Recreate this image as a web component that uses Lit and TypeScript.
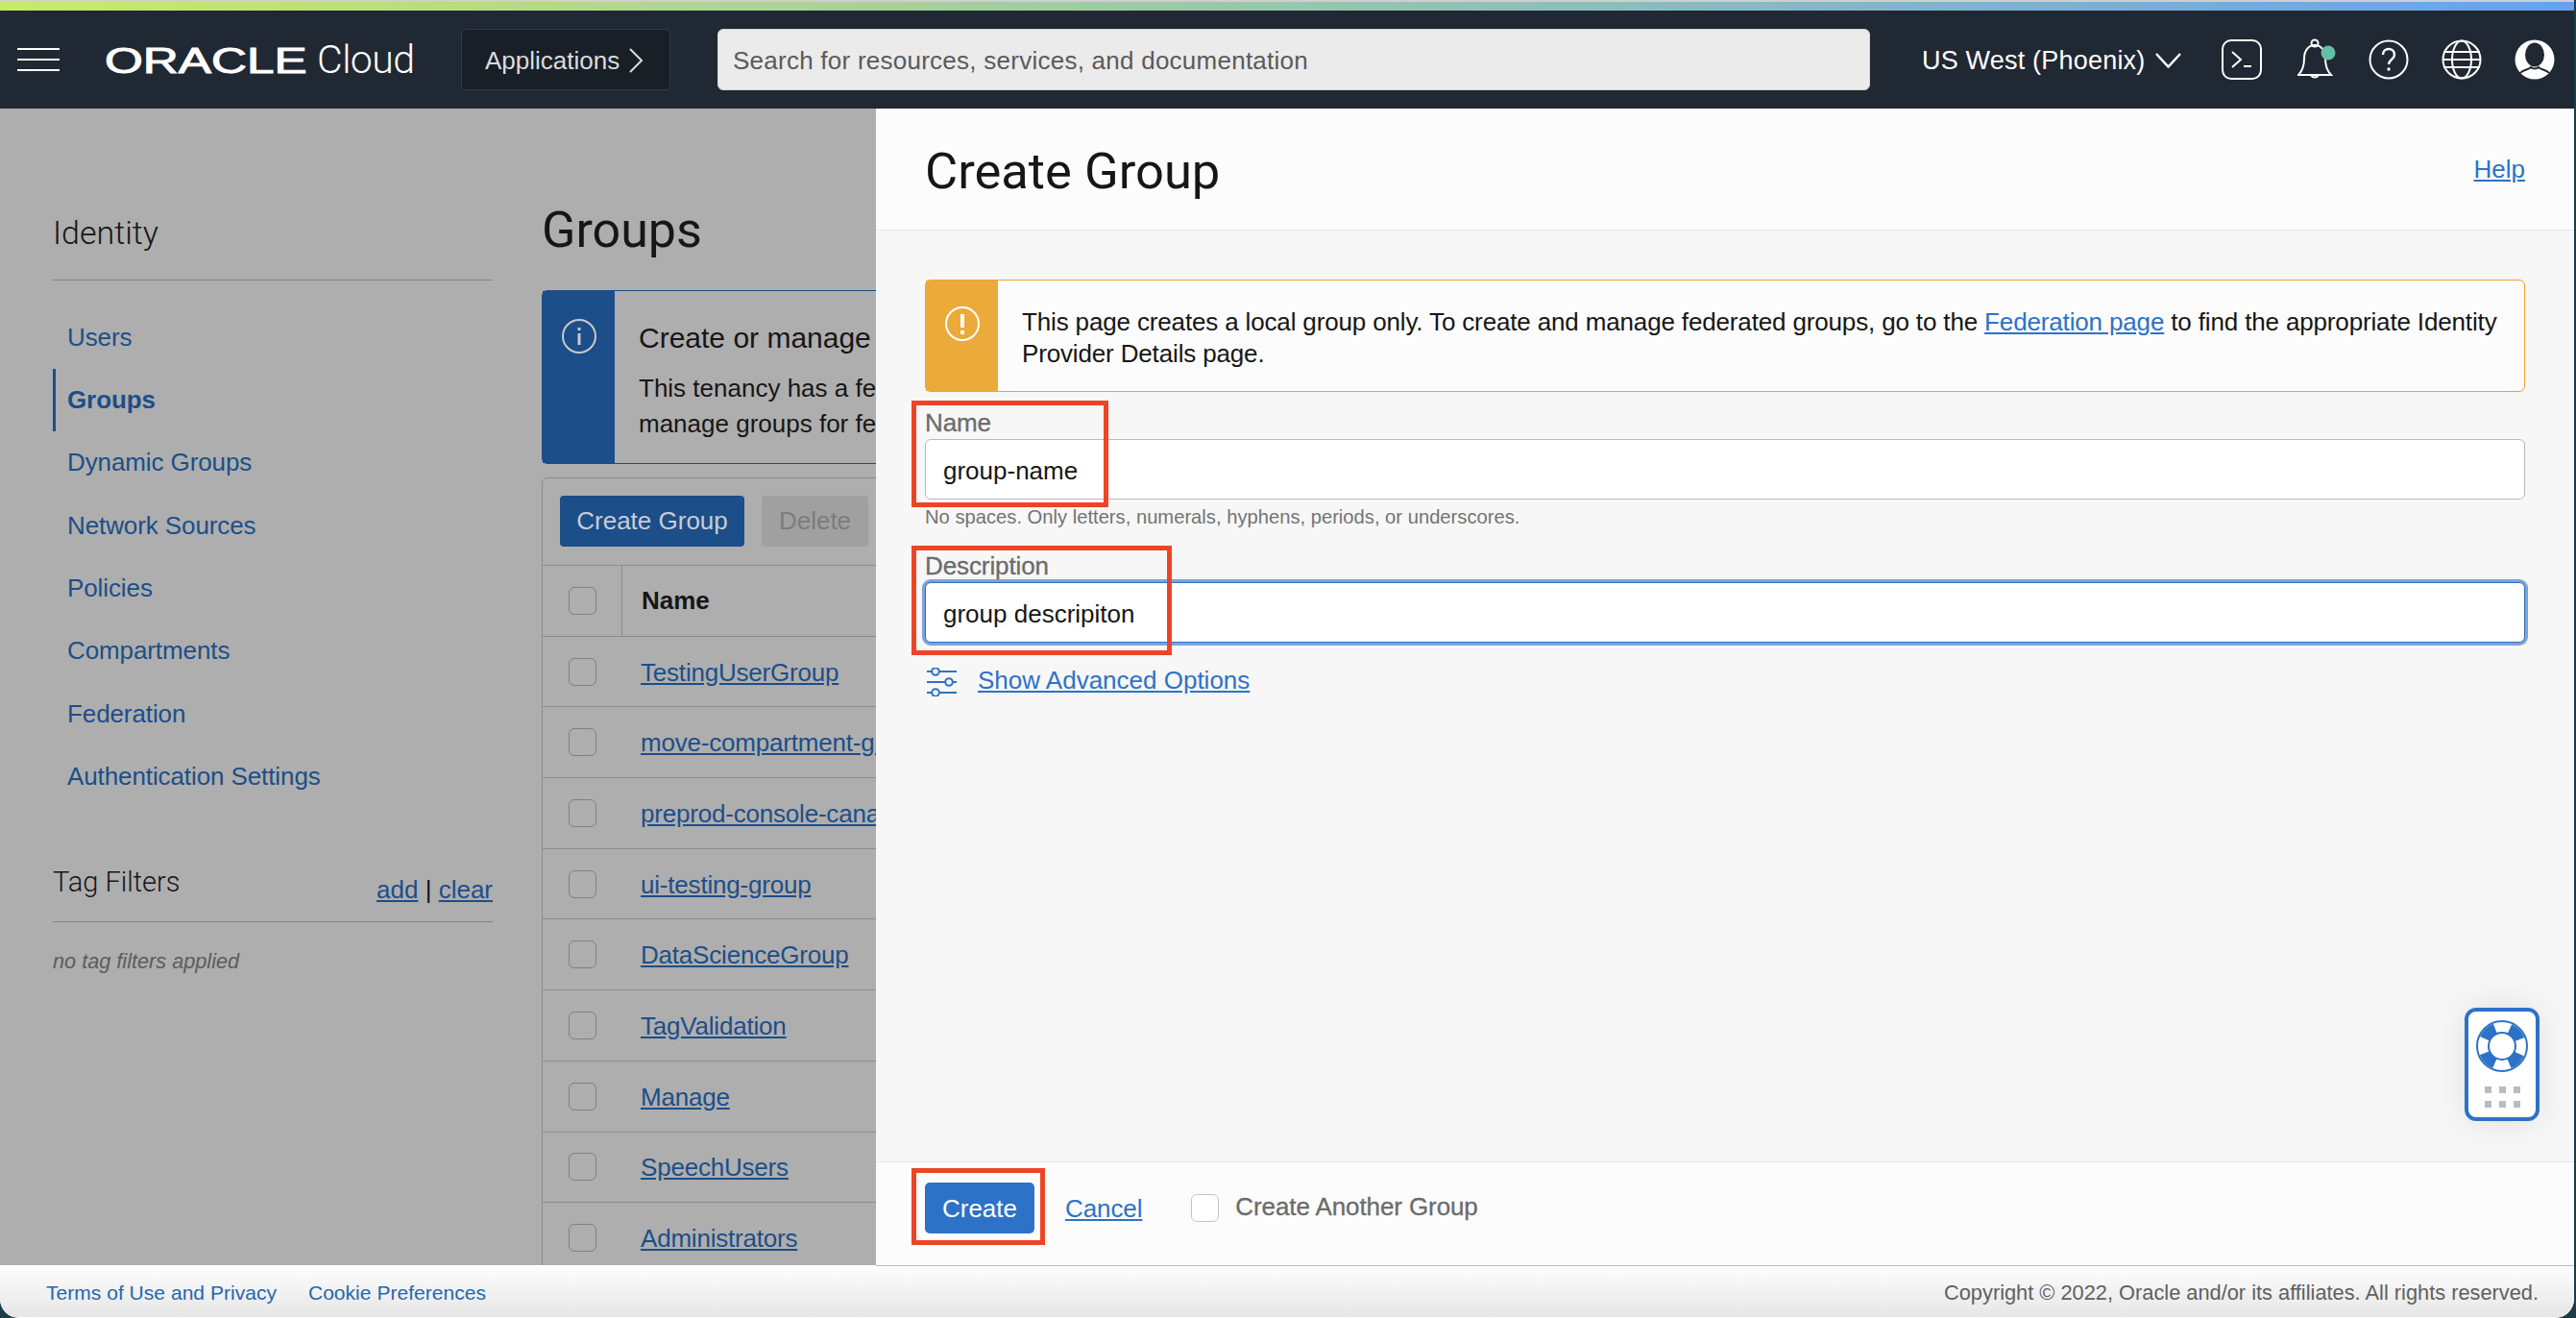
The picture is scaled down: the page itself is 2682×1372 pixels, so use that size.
import { LitElement, html, css } from 'lit';
import { customElement } from 'lit/decorators.js';

const NAV = [
  'Users',
  'Groups',
  'Dynamic Groups',
  'Network Sources',
  'Policies',
  'Compartments',
  'Federation',
  'Authentication Settings',
];

const GROUPS = [
  'TestingUserGroup',
  'move-compartment-group',
  'preprod-console-canary',
  'ui-testing-group',
  'DataScienceGroup',
  'TagValidation',
  'Manage',
  'SpeechUsers',
  'Administrators',
];

// red callouts drawn over the screenshot: x, y, w, h
const CALLOUTS = [
  [949, 417, 205, 111],
  [949, 568, 271, 114],
  [949, 1216, 139, 80],
];

@customElement('oci-topbar')
export class OciTopbar extends LitElement {
  static styles = css`
    :host {
      display: flex;
      align-items: center;
      height: 102px;
      padding-left: 18px;
      background: #202833;
      color: #fff;
      font-family: 'Liberation Sans', Arial, sans-serif;
      font-size: 26px;
    }
    .burger {
      display: flex;
      flex-direction: column;
      gap: 9px;
      width: 44px;
      margin-right: 47px;
    }
    .burger span {
      height: 2px;
      background: #fff;
    }
    .logo {
      width: 207px;
      margin-right: 14px;
      padding-top: 3px;
      font-size: 37px;
      line-height: 40px;
      -webkit-text-stroke: 1px #fff;
      transform: scaleX(1.385);
      transform-origin: left center;
      white-space: nowrap;
    }
    .cloud {
      width: 99px;
      margin-right: 51px;
      font-family: Roboto, 'Liberation Sans', sans-serif;
      font-size: 41px;
      font-weight: 300;
      letter-spacing: -0.5px;
    }
    .apps {
      display: flex;
      align-items: center;
      gap: 9px;
      box-sizing: border-box;
      width: 218px;
      height: 64px;
      margin-right: 49px;
      padding: 2px 0 0 24px;
      background: #181f27;
      border: 1px solid #323c48;
      border-radius: 4px;
      color: #dcdcdc;
    }
    .search {
      box-sizing: border-box;
      width: 1200px;
      height: 64px;
      padding-left: 15px;
      background: #ebebeb;
      border: 1px solid #d4d4d4;
      border-radius: 6px;
      color: #5a5a5a;
      letter-spacing: 0.25px;
      line-height: 64px;
    }
    .region {
      display: flex;
      align-items: center;
      gap: 11px;
      margin-left: 54px;
      padding-top: 2px;
      font-size: 27px;
      letter-spacing: 0.2px;
      white-space: nowrap;
    }
    .icons {
      display: flex;
      align-items: center;
      gap: 34px;
      margin-left: 42px;
    }
    .bell {
      margin: 0 -4px 0 3px;
    }
    svg {
      display: block;
      fill: none;
      stroke: currentColor;
      stroke-width: 2;
    }
  `;

  render() {
    return html`
      <div class="burger"><span></span><span></span><span></span></div>
      <div class="logo">ORACLE</div>
      <div class="cloud">Cloud</div>
      <div class="apps">
        Applications
        <svg width="16" height="26" viewBox="0 0 16 26"><path d="M2 1l12 12L2 25" /></svg>
      </div>
      <div class="search">Search for resources, services, and documentation</div>
      <div class="region">
        US West (Phoenix)
        <svg width="27" height="16" viewBox="0 0 27 16"><path d="M1 1l12.500 13.500L26 1" stroke-width="2.500" /></svg>
      </div>
      <div class="icons">
        <svg width="42" height="42" viewBox="0 0 42 42">
          <rect x="1" y="1" width="40" height="40" rx="9" />
          <path d="M11 13l9 8-9 8M23 28h8" />
        </svg>
        <svg class="bell" width="44" height="44" viewBox="0 0 44 44">
          <circle cx="18" cy="5" r="3.500" />
          <path d="M1 38c4-4 6-9 6-17 0-9 5-14 11-14s11 5 11 14c0 8 2 13 6 17zM14 38a4.500 4.500 0 0 0 8 0" />
          <circle cx="32" cy="15" r="7.500" fill="#62c0a3" stroke="none" />
        </svg>
        <svg width="42" height="42" viewBox="0 0 42 42">
          <circle cx="21" cy="21" r="19.500" />
          <path d="M15 16c0-4 3-6 6-6s6 2 6 6c0 5-6 5-6 10" stroke-width="2.400" />
          <circle cx="21" cy="31" r="1.700" fill="currentColor" stroke="none" />
        </svg>
        <svg width="42" height="42" viewBox="0 0 42 42">
          <circle cx="21" cy="21" r="19.500" />
          <ellipse cx="21" cy="21" rx="10" ry="19.500" />
          <path d="M2 13h38M1.500 21h39M2 29h38" />
        </svg>
        <svg width="42" height="42" viewBox="0 0 42 42">
          <circle cx="21" cy="21" r="20.500" fill="#fff" stroke="none" />
          <ellipse cx="21" cy="16" rx="10" ry="12.500" fill="#202833" stroke="none" />
          <path d="M6 35c3-4 9-3 11-6 2 2 6 2 8 0 2 3 8 2 11 6" stroke="#202833" />
        </svg>
      </div>
    `;
  }
}

@customElement('groups-page')
export class GroupsPage extends LitElement {
  static styles = css`
    :host {
      display: flex;
      height: 1204px;
      overflow: hidden;
      background: #aeaeae;
      color: #161616;
      font-family: 'Liberation Sans', Arial, sans-serif;
      font-size: 26px;
    }
    a {
      color: #1c4e89;
    }
    .side {
      flex: none;
      width: 458px;
      margin-left: 55px;
    }
    .side-title {
      margin-top: 99px;
      padding-bottom: 19px;
      border-bottom: 1px solid #848484;
      font-family: Roboto, 'Liberation Sans', sans-serif;
      font-size: 34px;
      font-weight: 300;
      line-height: 60px;
    }
    nav {
      margin-top: 26.500px;
    }
    nav div {
      box-sizing: border-box;
      height: 65.400px;
      padding-left: 15px;
      color: #1c4e89;
      letter-spacing: -0.1px;
      line-height: 65px;
    }
    nav .active {
      padding-left: 12px;
      border-left: 3px solid #1c4e89;
      font-weight: 700;
    }
    .tag-head {
      display: flex;
      justify-content: space-between;
      align-items: flex-start;
      margin-top: 45px;
      padding-bottom: 3px;
      border-bottom: 1px solid #848484;
      line-height: 60px;
    }
    .tag-head b {
      padding-top: 1px;
      font-family: Roboto, 'Liberation Sans', sans-serif;
      font-size: 29px;
      font-weight: 300;
    }
    .tag-links {
      margin-top: 9px;
    }
    .tag-empty {
      margin-top: 27px;
      color: #5c5c5c;
      font-size: 21.700px;
      font-style: italic;
      line-height: 28px;
    }
    .main {
      flex: none;
      width: 370px;
      margin-left: 51px;
      overflow: hidden;
    }
    h1 {
      margin: 87px 0 22px;
      font-family: Roboto, 'Liberation Sans', sans-serif;
      font-size: 52px;
      font-weight: 400;
      line-height: 80px;
    }
    .banner {
      display: flex;
      box-sizing: border-box;
      height: 181px;
      border: 1px solid #1c4e89;
      border-radius: 6px 0 0 6px;
    }
    .banner-band {
      flex: none;
      width: 75px;
      padding-top: 29px;
      box-sizing: border-box;
      background: #1c4e89;
      color: #c9c9c9;
    }
    .banner-band svg {
      display: block;
      margin: 0 auto;
    }
    .banner-body {
      padding: 29px 0 0 25px;
      line-height: 37px;
      white-space: nowrap;
    }
    .banner-body strong {
      display: block;
      margin-bottom: 14px;
      font-size: 30px;
      font-weight: 400;
      line-height: 40px;
    }
    .table {
      margin-top: 14px;
      border: 1px solid #8c8c8c;
      border-radius: 6px 0 0 0;
    }
    .toolbar {
      display: flex;
      gap: 18px;
      height: 90px;
      box-sizing: border-box;
      padding: 18px 0 0 18px;
    }
    .btn {
      flex: none;
      box-sizing: border-box;
      height: 53px;
      border-radius: 4px;
      line-height: 53px;
      text-align: center;
      white-space: nowrap;
    }
    .primary {
      width: 192px;
      background: #1c4e89;
      color: #c6cdd6;
    }
    .disabled {
      width: 111px;
      background: #a0a0a0;
      color: #7c7c7c;
    }
    .row {
      display: flex;
      align-items: center;
      height: 73.700px;
      box-sizing: border-box;
      border-top: 1px solid #8c8c8c;
    }
    .cell-check {
      flex: none;
      width: 83px;
      height: 100%;
      display: flex;
      align-items: center;
      padding-left: 27px;
      box-sizing: border-box;
    }
    .box {
      width: 29px;
      height: 29px;
      box-sizing: border-box;
      border: 1px solid #808080;
      border-radius: 6px;
    }
    .head .cell-check {
      border-right: 1px solid #8c8c8c;
    }
    .head .name {
      padding-left: 20px;
      font-weight: 700;
    }
    .row a {
      padding: 2px 0 0 19px;
      letter-spacing: -0.2px;
      white-space: nowrap;
    }
  `;

  render() {
    return html`
      <div class="side">
        <div class="side-title">Identity</div>
        <nav>
          ${NAV.map((n) => html`<div class=${n === 'Groups' ? 'active' : ''}>${n}</div>`)}
        </nav>
        <div class="tag-head">
          <b>Tag Filters</b>
          <span class="tag-links"><a href="#">add</a> | <a href="#">clear</a></span>
        </div>
        <div class="tag-empty">no tag filters applied</div>
      </div>
      <div class="main">
        <h1>Groups</h1>
        <div class="banner">
          <div class="banner-band">
            <svg width="36" height="36" viewBox="0 0 36 36" fill="none" stroke="currentColor" stroke-width="2">
              <circle cx="18" cy="18" r="17" />
              <path d="M18 15v12M18 9v3" stroke-width="3" />
            </svg>
          </div>
          <div class="banner-body">
            <strong>Create or manage</strong>
            This tenancy has a fed<br />
            manage groups for fed
          </div>
        </div>
        <div class="table">
          <div class="toolbar">
            <div class="btn primary">Create Group</div>
            <div class="btn disabled">Delete</div>
          </div>
          <div class="row head">
            <div class="cell-check"><div class="box"></div></div>
            <div class="name">Name</div>
          </div>
          ${GROUPS.map(
            (g) => html`
              <div class="row">
                <div class="cell-check"><div class="box"></div></div>
                <a href="#">${g}</a>
              </div>
            `
          )}
        </div>
      </div>
    `;
  }
}

@customElement('create-group-drawer')
export class CreateGroupDrawer extends LitElement {
  static styles = css`
    :host {
      display: flex;
      flex-direction: column;
      height: 100%;
      box-sizing: border-box;
      background: #f7f7f7;
      border-bottom: 1px solid #bdbdbd;
      color: #161616;
      font-family: 'Liberation Sans', Arial, sans-serif;
      font-size: 26px;
    }
    a {
      color: #2d72c6;
    }
    .head {
      display: flex;
      flex: none;
      justify-content: space-between;
      align-items: center;
      box-sizing: border-box;
      height: 127px;
      padding: 4px 51px 0;
      background: #fcfcfc;
      border-bottom: 1px solid #e4e4e4;
    }
    h2 {
      margin: 0;
      font-family: Roboto, 'Liberation Sans', sans-serif;
      font-size: 52.500px;
      font-weight: 400;
    }
    .head a {
      margin-top: -3px;
    }
    .body {
      flex: 1;
      padding: 51px 51px 0;
    }
    .alert {
      display: flex;
      box-sizing: border-box;
      height: 117px;
      background: #fcfcfc;
      border: 1px solid #eba42f;
      border-radius: 6px;
    }
    .alert-band {
      flex: none;
      width: 75px;
      box-sizing: border-box;
      padding-top: 27px;
      background: #ebaa3a;
      color: #fff;
    }
    .alert-band svg {
      display: block;
      margin: 0 auto;
    }
    .alert-text {
      padding: 27px 20px 0 25px;
      letter-spacing: -0.15px;
      line-height: 33px;
    }
    label {
      display: block;
      margin-top: 17px;
      color: #6b6b6b;
      font-size: 26px;
      letter-spacing: -0.1px;
      line-height: 30px;
      -webkit-text-stroke: 0.3px #6b6b6b;
    }
    .input {
      box-sizing: border-box;
      height: 63px;
      margin-top: 2px;
      padding: 1px 0 0 18px;
      background: #fff;
      border: 1px solid #b6b9be;
      border-radius: 6px;
      line-height: 62px;
    }
    .input.focus {
      border-color: #2f6fc0;
      box-shadow: 0 0 0 3px #7da3d9;
    }
    .hint {
      margin-top: 5px;
      color: #737373;
      font-size: 20.200px;
      line-height: 26px;
    }
    .hint + label {
      margin-top: 23px;
    }
    .advanced {
      display: flex;
      align-items: center;
      gap: 22px;
      margin-top: 22px;
      padding-left: 2px;
      color: #2d72c6;
      line-height: 30px;
    }
    .advanced svg {
      margin-top: 4px;
    }
    .foot {
      display: flex;
      flex: none;
      align-items: center;
      box-sizing: border-box;
      height: 108px;
      padding: 0 0 12px 51px;
      background: #fcfcfc;
      border-top: 1px solid #e4e4e4;
    }
    .create {
      box-sizing: border-box;
      width: 114px;
      height: 53px;
      padding-top: 1px;
      background: #2d72c6;
      border-radius: 5px;
      color: #fff;
      line-height: 53px;
      text-align: center;
    }
    .cancel {
      margin: 2px 0 0 32px;
      letter-spacing: -0.1px;
    }
    .check {
      width: 29px;
      height: 29px;
      box-sizing: border-box;
      margin-left: 51px;
      background: #fff;
      border: 1px solid #c4c4c4;
      border-radius: 6px;
    }
    .check-label {
      margin: 0 0 2px 17px;
      color: #6b6b6b;
      letter-spacing: -0.1px;
      -webkit-text-stroke: 0.3px #6b6b6b;
    }
    .helper {
      position: absolute;
      right: 36px;
      top: 936px;
      display: flex;
      flex-direction: column;
      align-items: center;
      box-sizing: border-box;
      width: 78px;
      height: 118px;
      padding-top: 9px;
      background: #fff;
      border: 4px solid #2d72c6;
      border-radius: 12px;
      box-shadow: 0 0 34px rgba(0, 0, 0, 0.1);
    }
    .dots {
      display: grid;
      grid-template-columns: repeat(3, 7px);
      gap: 8px;
      margin-top: 15px;
    }
    .dots span {
      height: 7px;
      background: #b8bcc1;
    }
  `;

  render() {
    return html`
      <div class="head">
        <h2>Create Group</h2>
        <a href="#">Help</a>
      </div>
      <div class="body">
        <div class="alert">
          <div class="alert-band">
            <svg width="36" height="36" viewBox="0 0 36 36" fill="none" stroke="currentColor" stroke-width="2">
              <circle cx="18" cy="18" r="17" />
              <path d="M18 8v14M18 25v4" stroke-width="4" />
            </svg>
          </div>
          <div class="alert-text">
            This page creates a local group only. To create and manage federated groups, go to the
            <a href="#">Federation page</a> to find the appropriate Identity Provider Details page.
          </div>
        </div>
        <label>Name</label>
        <div class="input">group-name</div>
        <div class="hint">No spaces. Only letters, numerals, hyphens, periods, or underscores.</div>
        <label>Description</label>
        <div class="input focus">group descripiton</div>
        <div class="advanced">
          <svg width="31" height="30" viewBox="0 0 31 30" fill="none" stroke="currentColor" stroke-width="2">
            <path d="M0 4h5M13 4h18M0 15h19M27 15h4M0 26h5M13 26h18" />
            <circle cx="9" cy="4" r="3.800" />
            <circle cx="23" cy="15" r="3.800" />
            <circle cx="9" cy="26" r="3.800" />
          </svg>
          <a href="#">Show Advanced Options</a>
        </div>
      </div>
      <div class="foot">
        <div class="create">Create</div>
        <a class="cancel" href="#">Cancel</a>
        <div class="check"></div>
        <div class="check-label">Create Another Group</div>
      </div>
      <div class="helper">
        <svg width="54" height="54" viewBox="0 0 54 54" fill="none">
          <circle cx="27" cy="27" r="26" stroke="#2d72c6" stroke-width="2" />
          <circle cx="27" cy="27" r="19.500" stroke="#2d72c6" stroke-width="11" stroke-dasharray="15.300 15.300" stroke-dashoffset="7.650" transform="rotate(45 27 27)" />
          <circle cx="27" cy="27" r="14" stroke="#2d72c6" stroke-width="2" />
        </svg>
        <div class="dots">
          <span></span><span></span><span></span><span></span><span></span><span></span>
        </div>
      </div>
    `;
  }
}

@customElement('app-root')
export class AppRoot extends LitElement {
  static styles = css`
    :host {
      display: block;
      height: 100vh;
      overflow: hidden;
      background: #1d3c48;
    }
    .frame {
      position: relative;
      width: 2680px;
      height: 1372px;
      overflow: hidden;
      background: #fff;
      border-radius: 0 0 20px 20px;
    }
    .chrome {
      height: 2px;
      background: #cfcfcf;
    }
    .accent {
      height: 9px;
      background: linear-gradient(90deg, #c8ea68, #65a3f0);
    }
    .drawer {
      position: absolute;
      top: 113px;
      left: 912px;
      right: 0;
      height: 1205px;
    }
    .callout {
      position: absolute;
      box-sizing: border-box;
      border: 5px solid #ee4426;
    }
    footer {
      display: flex;
      align-items: center;
      box-sizing: border-box;
      height: 54px;
      padding: 4px 37px 0 48px;
      background: linear-gradient(180deg, #fefefe, #e6e6e6);
      color: #5f5f5f;
      font-family: 'Liberation Sans', Arial, sans-serif;
      font-size: 21px;
    }
    footer a {
      margin-right: 33px;
      color: #2567ae;
      letter-spacing: 0.03px;
      text-decoration: none;
    }
    footer span {
      margin-left: auto;
      font-size: 21.800px;
    }
  `;

  render() {
    return html`
      <div class="frame">
        <div class="chrome"></div>
        <div class="accent"></div>
        <oci-topbar></oci-topbar>
        <groups-page></groups-page>
        <footer>
          <a href="#">Terms of Use and Privacy</a>
          <a href="#">Cookie Preferences</a>
          <span>Copyright © 2022, Oracle and/or its affiliates. All rights reserved.</span>
        </footer>
        <div class="drawer"><create-group-drawer></create-group-drawer></div>
        ${CALLOUTS.map(
          ([x, y, w, h]) =>
            html`<div class="callout" style="left:${x}px;top:${y}px;width:${w}px;height:${h}px"></div>`
        )}
      </div>
    `;
  }
}
